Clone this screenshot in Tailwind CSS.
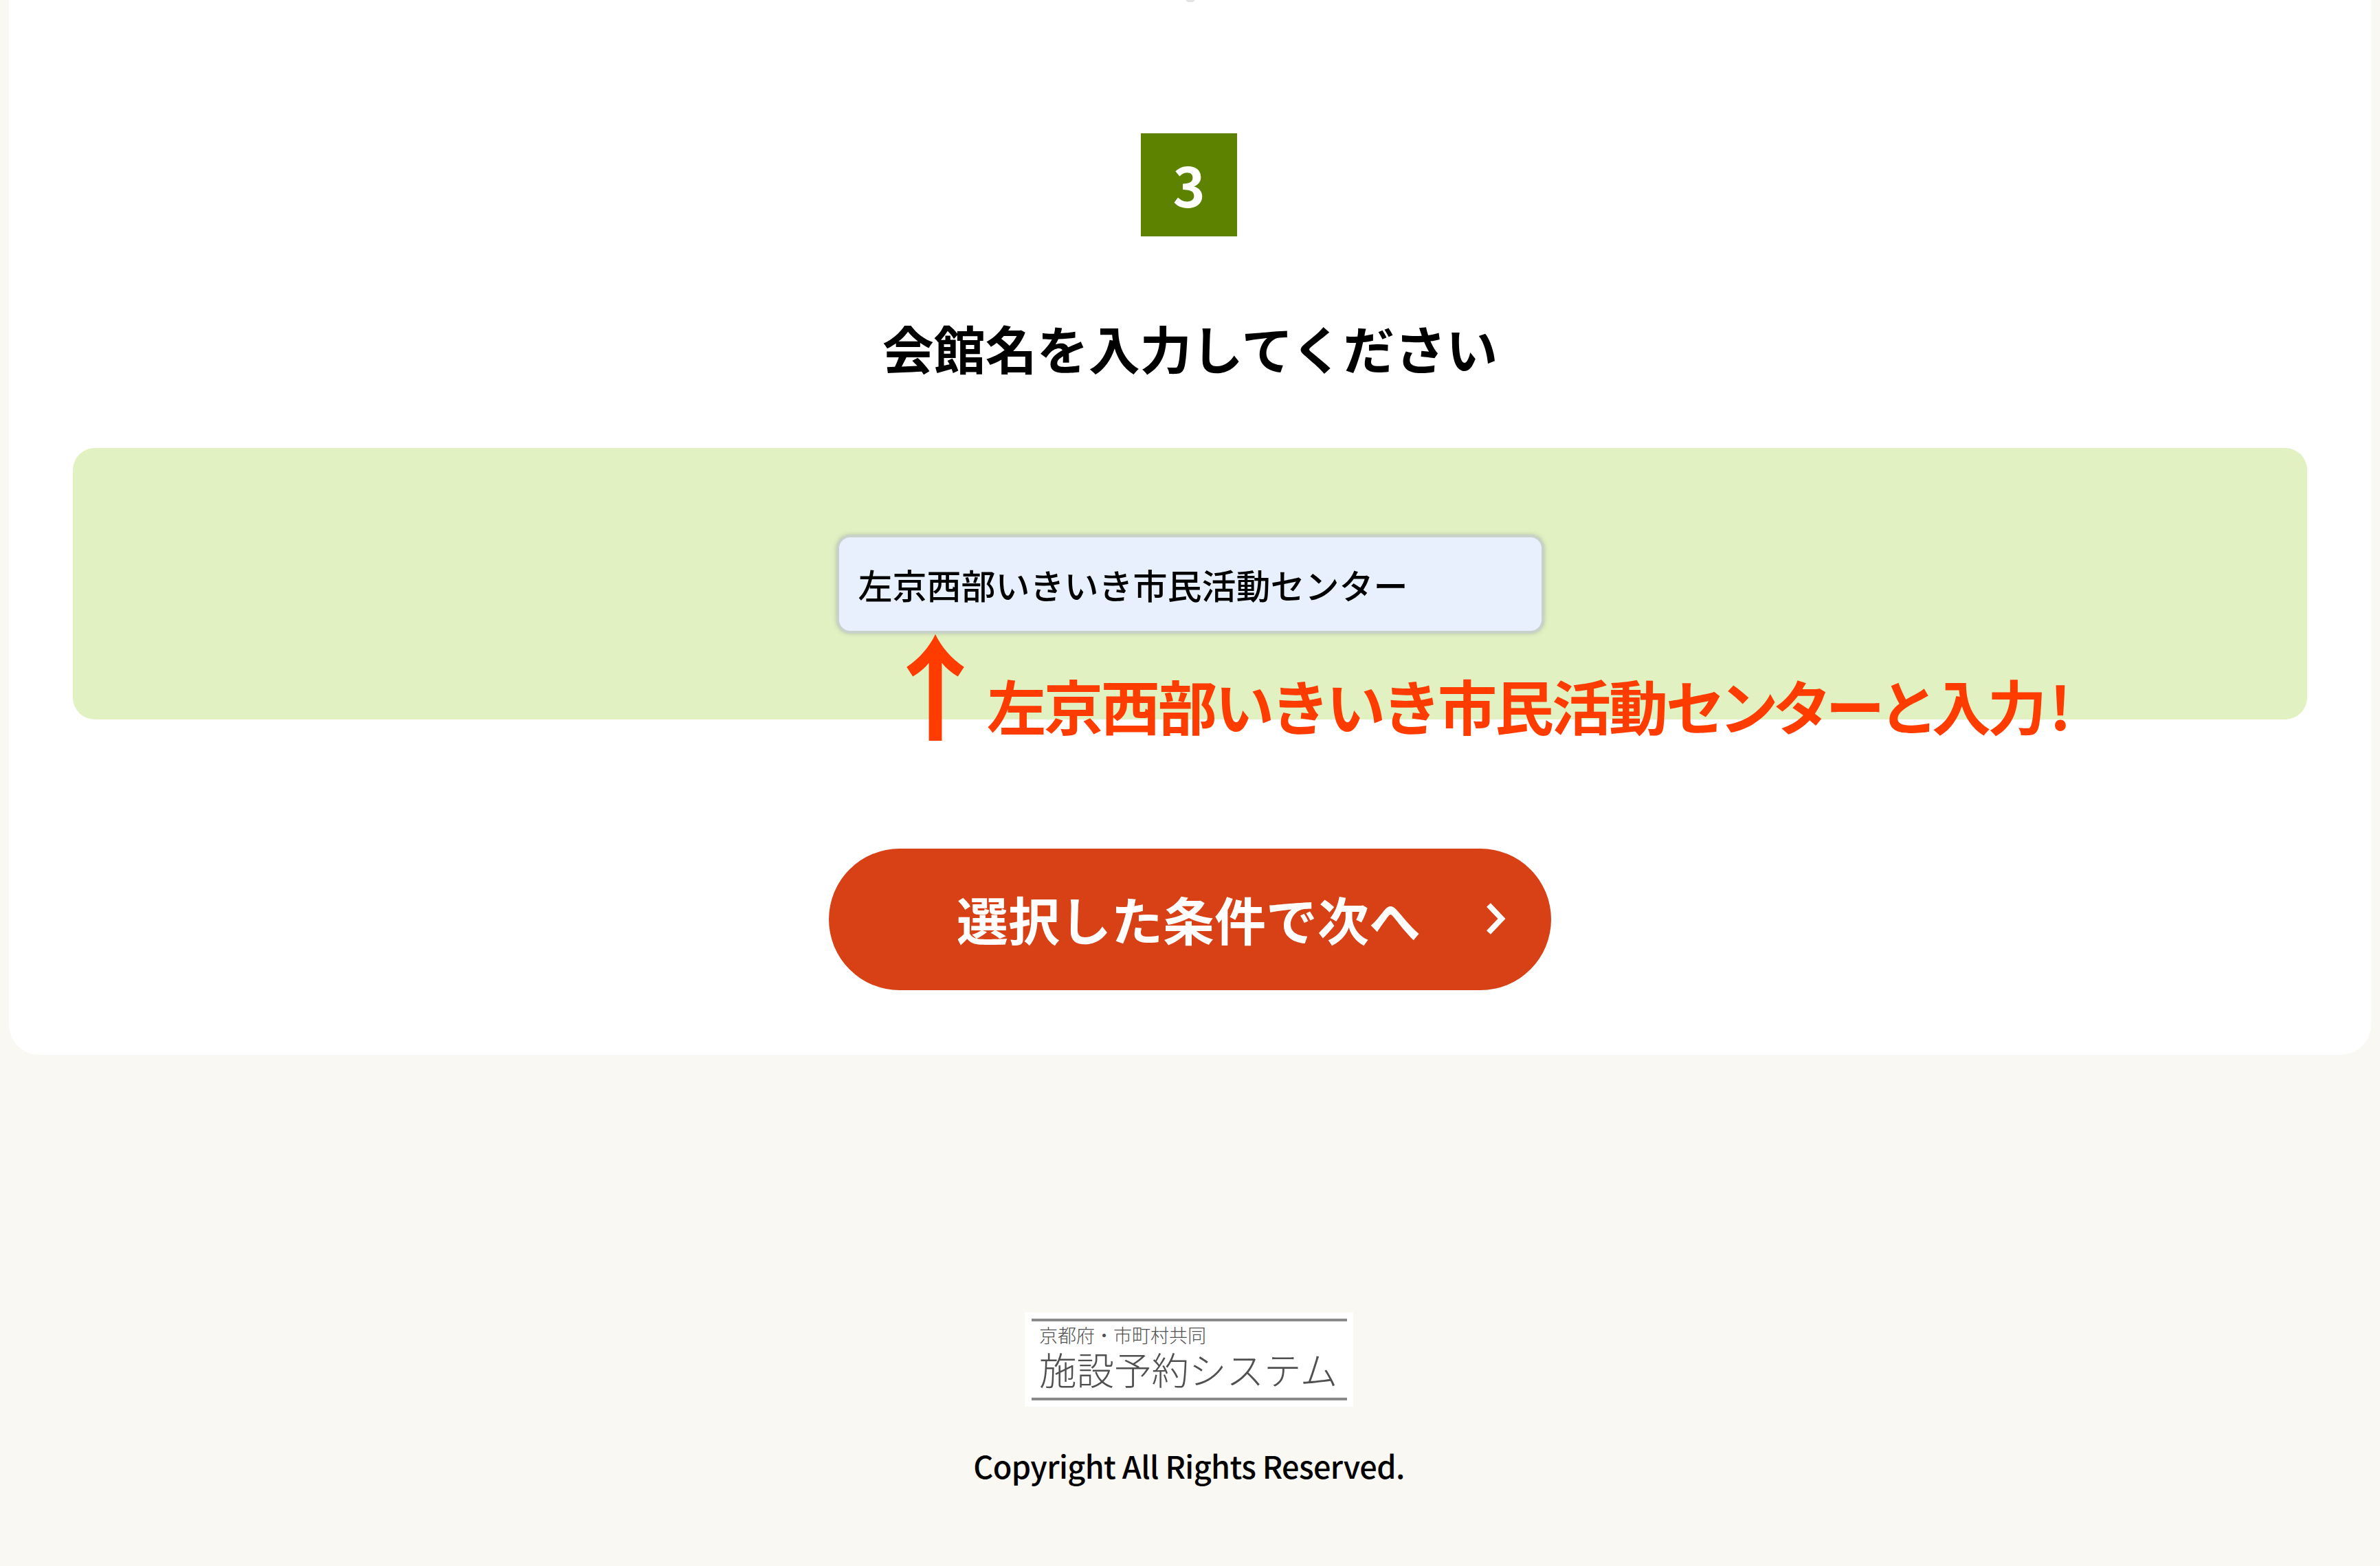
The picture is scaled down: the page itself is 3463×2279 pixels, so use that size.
<!DOCTYPE html>
<html lang="ja">
<head>
  <meta charset="UTF-8" />
  <meta name="viewport" content="width=device-width, initial-scale=1.0"/>
  <title>施設予約システム</title>
  <script src="https://cdn.jsdelivr.net/npm/@tailwindcss/browser@4"></script>
</head>
<body class="bg-[#f9f8f2] text-black font-['Noto_Sans_CJK_JP',sans-serif] h-[2279px] overflow-hidden">

  <!-- Search step -->
  <main class="relative bg-white ml-[13px] mr-[13px] px-[93px] pt-[194px] pb-[94px] rounded-b-[44px] flex flex-col items-center">
    <span class="absolute top-0 left-[1713px] w-3 h-[3px] bg-[#e4e4e4] rounded-b-full"></span>

    <div class="w-[140px] h-[150px] mr-[3px] bg-[#5c8200] text-white text-[80px] font-bold leading-[147px] text-center">3</div>
    <h2 class="mt-[112px] text-[75px] leading-[100px] font-bold whitespace-nowrap">会館名を入力してください</h2>

    <div class="relative w-full h-[395px] mt-[96px] bg-[#e1f1c2] rounded-[32px] flex items-center justify-center">
      <input type="text" value="左京西部いきいき市民活動センター" class="w-[1030px] h-[144px] px-[28px] bg-[#e8f0fe] border-4 border-[#c9d2c8] rounded-[20px] shadow-[0_0_6px_#b8c4a8] text-[50px] font-medium outline-none" />

      <!-- Hint -->
      <svg class="absolute left-[1213px] top-[271px] w-[84px] h-[156px]" viewBox="0 0 84 157" fill="#ff3c00">
        <path d="M42 0C51 19 65 35 84 48L75 62C65 56 57 49 51.500 42V156H32.500V42C27 49 19 56 9 62L0 48C19 35 33 19 42 0Z"/>
      </svg>
      <p class="absolute left-[1330px] top-[309px] text-[#ff3c00] text-[86px] leading-[130px] font-bold whitespace-nowrap"><span class="tracking-[-3px]">左京西部</span><span class="tracking-[-5px]">いきいき</span><span class="tracking-[-3px]">市民活動</span><span class="tracking-[-8.5px]">センター</span><span class="tracking-[-9px]">と</span><span class="tracking-[-5px]">入</span><span class="tracking-[4px]">力</span>!</p>
    </div>

    <button class="relative w-[1051px] h-[206px] mt-[188px] bg-[#d84016] rounded-full text-white text-[75px] leading-none font-bold">
      <span class="block -mt-1 mr-1">選択した条件で次へ</span>
      <svg class="absolute right-[64px] top-[78px] w-[32px] h-[48px]" viewBox="0 0 32 48" fill="none" stroke="#fff" stroke-width="8">
        <path d="M5 4L24 24L5 44"/>
      </svg>
    </button>
  </main>

  <!-- Footer -->
  <footer class="pt-[375px] flex flex-col items-center">
    <div class="w-[478px] h-[137px] mr-[3px] bg-white pl-[10px] pr-[9px] pt-[9px]">
      <div class="h-[119px] border-y-4 border-[#8a8a8a] pl-[11px] whitespace-nowrap text-[#505050]">
        <p class="text-[27px] leading-[40px] font-light">京都府・市町村共同</p>
        <p class="text-[54.5px] leading-[58px] font-light">施設予約システム</p>
      </div>
    </div>
    <p class="mt-[56px] mr-[3px] text-[45px] tracking-[-0.6px] leading-[60px] font-medium whitespace-nowrap">Copyright All Rights Reserved.</p>
  </footer>

</body>
</html>
